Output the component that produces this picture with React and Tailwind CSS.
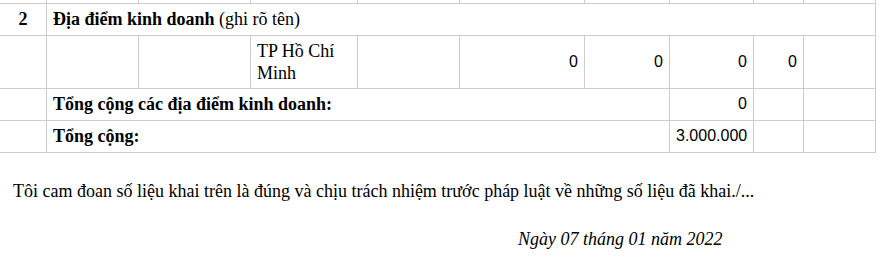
const cols = [47, 92, 112, 107, 102, 125, 85, 84, 50, 72];

const cell = 'border border-[#cccccc] px-[6px] align-middle';
const num = `${cell} text-right font-['Liberation_Sans',Arial,sans-serif] text-[16px]`;

export default function App() {
  return (
    <div className="w-[881px] h-[259px] overflow-hidden bg-white text-black font-['Liberation_Serif','Times_New_Roman',serif] text-[18px] leading-[22px]">
      <table className="table-fixed border-collapse ml-[-1px] w-[877px]">
        <colgroup>
          {cols.map((w, i) => <col key={i} style={{ width: w }} />)}
        </colgroup>
        <tbody>
          <tr className="h-[3px]">
            {cols.map((_, i) => (
              <td key={i} className="border border-t-0 border-[#cccccc] p-0 h-[3px]" />
            ))}
          </tr>
          <tr className="h-[32px]">
            <td className={`${cell} text-center font-bold`}>2</td>
            <td className={cell} colSpan={9}>
              <b>Địa điểm kinh doanh</b> (ghi rõ tên)
            </td>
          </tr>
          <tr className="h-[53px]">
            <td className={cell} />
            <td className={cell} />
            <td className={cell} />
            <td className={cell}>TP Hồ Chí Minh</td>
            <td className={cell} />
            <td className={num}>0</td>
            <td className={num}>0</td>
            <td className={num}>0</td>
            <td className={num}>0</td>
            <td className={cell} />
          </tr>
          <tr className="h-[32px]">
            <td className={cell} />
            <td className={`${cell} font-bold`} colSpan={6}>Tổng cộng các địa điểm kinh doanh:</td>
            <td className={num}>0</td>
            <td className={cell} />
            <td className={cell} />
          </tr>
          <tr className="h-[32px]">
            <td className={cell} />
            <td className={`${cell} font-bold`} colSpan={6}>Tổng cộng:</td>
            <td className={num}>3.000.000</td>
            <td className={cell} />
            <td className={cell} />
          </tr>
        </tbody>
      </table>

      <p className="mt-[27px] pl-[13px]">
        Tôi cam đoan số liệu khai trên là đúng và chịu trách nhiệm trước pháp luật về những số liệu đã khai./...
      </p>

      <p className="mt-[26px] pl-[518px] italic">Ngày 07 tháng 01 năm 2022</p>
    </div>
  );
}
